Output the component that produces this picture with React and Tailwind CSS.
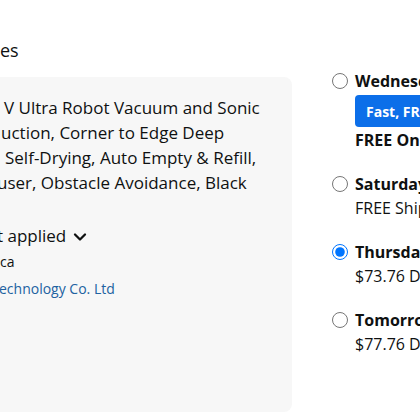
import { ChevronDown } from 'lucide-react';

const font = { fontFamily: '"Open Sans", "Noto Sans", Arial, sans-serif' };

// one delivery choice on the right
const Option = ({ label, checked, children }) => (
  <div className="flex flex-col">
    <label className="flex items-center gap-[7px] h-6">
      <input
        type="radio"
        name="ship"
        checked={checked}
        readOnly
        className="w-4 h-4 m-0 shrink-0"
      />
      <span className="text-[16px] font-bold leading-6 whitespace-nowrap">{label}</span>
    </label>
    <div className="pl-[23px]">{children}</div>
  </div>
);

export default function App() {
  return (
    <div
      className="w-[420px] h-[420px] overflow-hidden bg-white text-[#0f1111] flex items-start"
      style={font}
    >
      {/* Left: item card */}
      <div className="flex flex-col shrink-0 w-[292px] mt-[38px]">
        <div className="text-[18px] leading-6 whitespace-nowrap">es</div>

        <div className="mt-[15px] ml-[-20px] w-[312px] h-[335px] rounded-lg bg-[#f7f7f7] pl-[20px] pt-[18px] overflow-hidden">
          <div className="text-[17px] leading-[25px] whitespace-nowrap">
            <div className="pl-[4px]">V Ultra Robot Vacuum and Sonic</div>
            <div className="pl-[1px]">uction, Corner to Edge Deep</div>
            <div className="pl-[5px]">Self-Drying, Auto Empty &amp; Refill,</div>
            <div className="ml-[-3px]">user, Obstacle Avoidance, Black</div>
          </div>

          <div className="mt-[29px] flex items-center gap-1 h-6 ml-[-3px] text-[17px] whitespace-nowrap">
            <span>t applied</span>
            <ChevronDown size={20} strokeWidth={2.75} className="mt-[2px]" />
          </div>
          <div className="mt-1 text-[14px] leading-5 whitespace-nowrap">ca</div>
          <div className="mt-[7px] ml-[-1px] text-[14px] leading-5 text-[#2162a1] whitespace-nowrap">
            echnology Co. Ltd
          </div>
        </div>
      </div>

      {/* Right: delivery options */}
      <div className="ml-[40px] mt-[69px] flex flex-col gap-5 shrink-0">
        <Option label="Wednesday, Oct 9">
          <div className="mt-0.5 h-8 inline-flex items-center rounded bg-[#0c6fe9] pl-[11px] pr-3 text-white text-[14px] font-bold whitespace-nowrap">
            Fast, FREE delivery
          </div>
          <div className="text-[16px] font-bold leading-6 mt-px whitespace-nowrap">FREE One-Day Delivery</div>
        </Option>

        <Option label="Saturday, Oct 12">
          <div className="text-[16px] leading-6 whitespace-nowrap">FREE Shipping</div>
        </Option>

        <Option label="Thursday, Oct 10" checked>
          <div className="text-[16px] leading-6 whitespace-nowrap">$73.76 Delivery</div>
        </Option>

        <Option label="Tomorrow, Oct 8">
          <div className="text-[16px] leading-6 whitespace-nowrap">$77.76 Delivery</div>
        </Option>
      </div>
    </div>
  );
}
